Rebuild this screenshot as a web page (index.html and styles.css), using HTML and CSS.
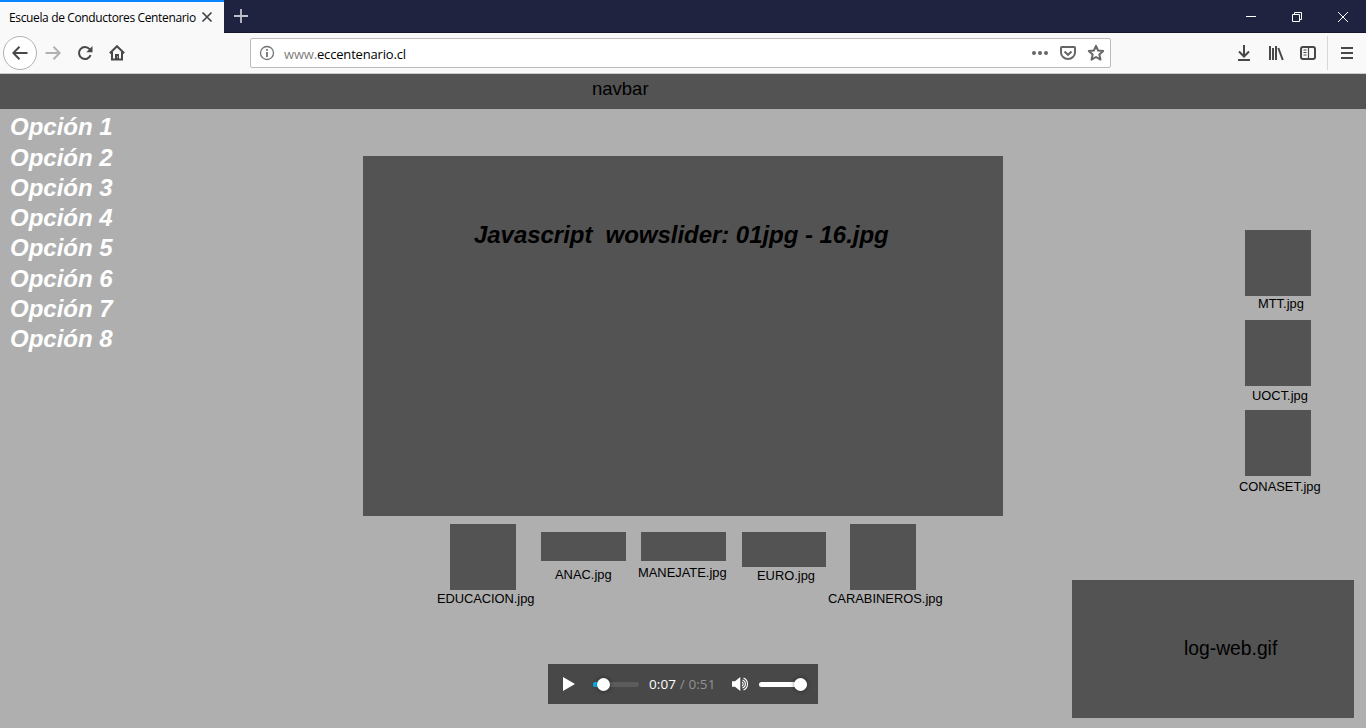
FILE: index.html
```html
<!DOCTYPE html>
<html lang="es">
<head>
<meta charset="utf-8">
<title>Escuela de Conductores Centenario</title>
<link rel="stylesheet" href="styles.css">
</head>
<body>
<header class="titlebar">
  <div class="tab">
    <span class="tab-title">Escuela de Conductores Centenario</span>
    <svg class="tab-close" width="12" height="12" viewBox="0 0 12 12"><path d="M1.500 1.500l9 9M10.500 1.500l-9 9"/></svg>
  </div>
  <svg class="new-tab" width="16" height="16" viewBox="0 0 16 16"><path d="M8 1v14M1 8h14"/></svg>
  <div class="window-buttons">
    <svg width="46" height="33" viewBox="0 0 46 33"><path d="M18 16.500h10"/></svg>
    <svg width="46" height="33" viewBox="0 0 46 33"><path d="M18.500 14.500h7v7h-7zM20.500 14.500v-2h7v7h-2"/></svg>
    <svg width="46" height="33" viewBox="0 0 46 33"><path d="M18 12l10 10M28 12l-10 10"/></svg>
  </div>
</header>
<nav class="toolbar">
  <span class="back"><svg width="16" height="16" viewBox="0 0 16 16"><path d="M15.500 8H1.500M7.500 1.800L1.300 8l6.200 6.200"/></svg></span>
  <svg class="icon forward" width="16" height="16" viewBox="0 0 16 16"><path d="M.5 8h14M8.500 1.800L14.700 8l-6.200 6.200"/></svg>
  <svg class="icon reload" width="16" height="16" viewBox="0 0 16 16"><path d="M13.600 10.200A6 6 0 1 1 12.600 4.200"/><path class="fill" d="M15.500 1v6.200H9.300z"/></svg>
  <svg class="icon home" width="16" height="16" viewBox="0 0 16 16"><path d="M.8 8.200L8 1.200l7.200 7M3 7v7.600h10V7"/><path class="fill" d="M6 9h4v6H6z"/><path class="light" d="M8.500 11.500v1"/></svg>
  <div class="urlbar">
    <svg class="info" width="16" height="16" viewBox="0 0 16 16"><circle cx="8" cy="8" r="6.500"/><path class="bar" d="M8 7v5M8 4v1.800"/></svg>
    <span class="url"><span class="sub">www.</span>eccentenario.cl</span>
    <svg class="dots" width="18" height="16" viewBox="0 0 18 16"><circle cx="3" cy="8" r="2"/><circle cx="9" cy="8" r="2"/><circle cx="15" cy="8" r="2"/></svg>
    <svg class="pocket" width="18" height="16" viewBox="0 0 18 16"><path d="M2.800 2h12.400Q16 2 16 2.800V7.500a7 6.500 0 0 1-14 0V2.800Q2 2 2.800 2z"/><path d="M5.500 6.500L9 9.800l3.500-3.300"/></svg>
    <svg class="star" width="18" height="18" viewBox="0 0 18 18"><path d="M9 1.800l2.100 4.700 5.100.5-3.900 3.400 1.200 5.200L9 13l-4.500 2.600 1.200-5.200L1.800 7l5.100-.5z"/></svg>
  </div>
  <svg class="icon download" width="16" height="18" viewBox="0 0 16 18"><path d="M8 1v11M3 7.500l5 5 5-5M2 16h12"/></svg>
  <svg class="icon library" width="16" height="16" viewBox="0 0 16 16"><path d="M2 1v14M5 3v12M8 1v14M10.300 3l4.500 12"/></svg>
  <svg class="icon sidebar" width="18" height="16" viewBox="0 0 18 16"><rect x="2" y="2" width="14" height="12" rx="2"/><path class="thin" d="M9.500 2v12M4.500 5h3M4.500 7.500h3M4.500 10h3"/></svg>
  <span class="divider"></span>
  <svg class="icon burger" width="14" height="16" viewBox="0 0 14 16"><path d="M1 3h12M1 8h12M1 13h12"/></svg>
</nav>
<main class="page">
  <div class="navbar">navbar</div>
  <div class="content">
    <ul class="menu">
      <li>Opción 1</li><li>Opción 2</li><li>Opción 3</li><li>Opción 4</li>
      <li>Opción 5</li><li>Opción 6</li><li>Opción 7</li><li>Opción 8</li>
    </ul>
    <section class="center">
      <div class="slider">Javascript&nbsp; wowslider: 01jpg - 16.jpg</div>
      <div class="logos">
        <figure class="educacion"><div class="box"></div><figcaption>EDUCACION.jpg</figcaption></figure>
        <figure class="anac"><div class="box"></div><figcaption>ANAC.jpg</figcaption></figure>
        <figure class="manejate"><div class="box"></div><figcaption>MANEJATE.jpg</figcaption></figure>
        <figure class="euro"><div class="box"></div><figcaption>EURO.jpg</figcaption></figure>
        <figure class="carabineros"><div class="box"></div><figcaption>CARABINEROS.jpg</figcaption></figure>
      </div>
      <div class="player">
        <svg class="play" width="12" height="14" viewBox="0 0 12 14"><path d="M0 0l12 7-12 7z"/></svg>
        <div class="track"><span class="played"></span><span class="knob"></span></div>
        <span class="time">0:07 <span class="total">/ 0:51</span></span>
        <svg class="speaker" width="17" height="16" viewBox="0 0 17 16"><path class="cone" d="M0 5.200h3L8.300 1v14L3 10.800H0z"/><path d="M10 6a2.300 2.300 0 0 1 0 4M10.500 4a4.200 4.200 0 0 1 0 8M11.500 2a6.500 6.500 0 0 1 0 12"/></svg>
        <div class="volume"><span class="knob"></span></div>
      </div>
    </section>
    <aside class="side">
      <figure class="mtt"><div class="box"></div><figcaption>MTT.jpg</figcaption></figure>
      <figure class="uoct"><div class="box"></div><figcaption>UOCT.jpg</figcaption></figure>
      <figure class="conaset"><div class="box"></div><figcaption>CONASET.jpg</figcaption></figure>
      <div class="weblog">log-web.gif</div>
    </aside>
  </div>
</main>
</body>
</html>
```
FILE: styles.css
```css
* { box-sizing: border-box; }
body {
  margin: 0;
  height: 728px;
  overflow: hidden;
  display: flex;
  flex-direction: column;
  font-family: "Liberation Sans", Arial, sans-serif;
  color: #000;
}
svg { display: block; flex: none; fill: none; }

/* Title bar */
.titlebar { height: 33px; display: flex; align-items: center; background: #202340; border-bottom: 1px solid #15172d; }
.tab {
  width: 224px; height: 33px; flex: none; align-self: flex-start;
  display: flex; align-items: center;
  padding-left: 9px;
  background: #f9f9fa; border-top: 2px solid #0a84ff;
}
.tab-title { width: 192px; white-space: nowrap; font: 12px/18px "Open Sans", sans-serif; letter-spacing: -0.360px; }
.tab-close { margin-bottom: 2px; stroke: #444; stroke-width: 1.7; }
.new-tab { margin-left: 9px; stroke: #c0c0cc; stroke-width: 1.8; }
.window-buttons { margin-left: auto; display: flex; stroke: #fff; }

/* Toolbar */
.toolbar { height: 41px; flex: none; display: flex; align-items: center; padding-left: 3px; background: #f9f9fa; border-bottom: 1px solid #ccc; }
.icon { stroke: #484848; stroke-width: 2; }
.back { width: 34px; height: 34px; display: grid; place-items: center; border: 1px solid #b1b1b1; border-radius: 50%; background: #fff; stroke: #484848; stroke-width: 2; }
.forward { margin-left: 8px; stroke: #b1b1b3; }
.reload { margin-left: 16px; }
.home { margin-left: 16px; }
.fill { fill: #484848; stroke: none; }
.light { stroke: #f9f9fa; stroke-width: 1; }
.urlbar { width: 861px; height: 30px; margin-left: 125px; display: flex; align-items: center; padding: 0 5px 0 8px; background: #fff; border: 1px solid #bcbcbd; border-radius: 2px; }
.info { stroke: #737373; stroke-width: 1.3; }
.bar { stroke-width: 1.8; }
.url { margin-left: 9px; font: 13px/20px "Open Sans", sans-serif; letter-spacing: -0.170px; padding-top: 2px; }
.sub { color: #808080; }
.dots { margin-left: auto; fill: #666; }
.pocket { margin-left: 10px; stroke: #666; stroke-width: 2; }
.star { margin-left: 10px; stroke: #666; stroke-width: 2; stroke-linejoin: round; }
.download { margin-left: 125px; }
.library { margin-left: 16px; }
.sidebar { margin-left: 15px; }
.thin { stroke-width: 1.2; }
.divider { width: 1px; height: 34px; margin-left: 10px; background: #d7d7db; }
.burger { margin-left: 12px; }

/* Page */
.page { flex: 1; background: #afafaf; }
.navbar { height: 35px; padding: 4px 0 0 592px; background: #535353; font-size: 18.500px; line-height: 22px; }
.content { height: 619px; display: grid; grid-template-columns: 363px 640px 363px; }
.menu { margin: 0; padding: 3.300px 0 0 10px; list-style: none; color: #fff; font: italic bold 24px/30.290px "Liberation Sans", sans-serif; }

.slider { height: 360px; margin-top: 47px; padding: 64px 0 0 111px; background: #535353; font: italic bold 24px/30px "Liberation Sans", sans-serif; letter-spacing: -0.040px; white-space: nowrap; }
figure { margin: 0; }
figcaption { font-size: 12.900px; line-height: 15px; white-space: nowrap; }
.box { background: #535353; width: 66px; height: 66px; }
.logos { height: 148px; padding: 8px 0 0 73px; display: flex; }
.educacion { width: 97px; }
.educacion .box { margin-left: 14px; }
.educacion figcaption { margin: 1px 0 0 1px; letter-spacing: -0.060px; }
.anac { width: 85px; margin: 8px 0 0 8px; }
.anac .box { width: 85px; height: 29px; }
.anac figcaption { margin: 6px 0 0 14px; }
.manejate { width: 89px; margin: 8px 0 0 11px; }
.manejate .box { width: 85px; height: 29px; margin-left: 4px; }
.manejate figcaption { margin: 4px 0 0 1px; }
.euro { width: 84px; margin: 8px 0 0 16px; }
.euro .box { width: 84px; height: 35px; }
.euro figcaption { margin: 1px 0 0 15px; }
.carabineros { margin-left: 2px; }
.carabineros .box { margin-left: 22px; }
.carabineros figcaption { margin-top: 1px; }

/* Audio player */
.player { width: 270px; height: 40px; margin-left: 185px; padding-left: 15px; display: flex; align-items: center; background: #484848; }
.play { fill: #fff; }
.track { width: 46px; height: 5px; margin-left: 18px; display: flex; align-items: center; border-radius: 3px; background: #5b5b5b; }
.played { width: 6px; height: 5px; flex: none; border-radius: 3px 0 0 3px; background: #00b6f0; }
.knob { width: 13px; height: 13px; flex: none; border-radius: 50%; background: #fff; box-shadow: 0 0 4px rgba(0, 0, 0, 0.5); }
.track .knob { margin-left: -2px; }
.time { width: 67px; margin-left: 10px; white-space: nowrap; color: #fff; font: 13.500px/20px "Open Sans", sans-serif; letter-spacing: 0.100px; }
.total { color: #929292; }
.speaker { margin-left: 16px; stroke: #fff; stroke-width: 1.1; }
.cone { fill: #fff; stroke: none; }
.volume { width: 48px; height: 5px; margin-left: 10px; display: flex; align-items: center; justify-content: flex-end; border-radius: 3px; background: #fff; }

/* Right column */
.side { padding: 121px 0 0 235px; display: flex; flex-direction: column; }
.side .box { margin-left: 7px; }
.mtt { height: 90px; }
.mtt figcaption { margin-left: 20px; }
.uoct { height: 90px; }
.uoct figcaption { margin: 2px 0 0 14px; }
.conaset { height: 170px; }
.conaset figcaption { margin: 3px 0 0 1px; }
.weblog { width: 282px; height: 138px; margin-left: -166px; padding: 58px 0 0 112px; background: #535353; font-size: 19.300px; line-height: 22px; }
```
